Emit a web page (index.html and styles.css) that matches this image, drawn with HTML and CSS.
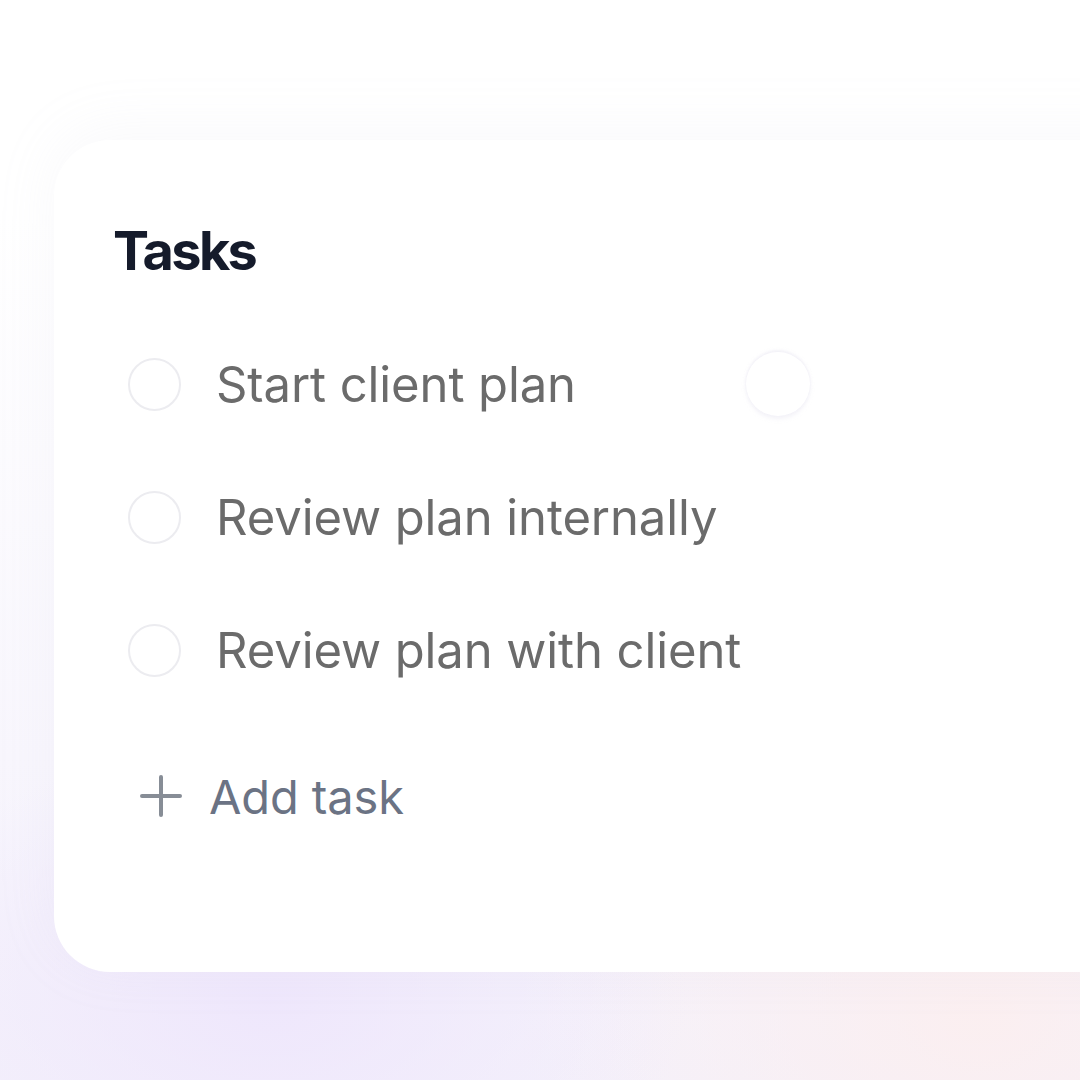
FILE: index.html
```html
<!DOCTYPE html>
<html>
<head>
<meta charset="utf-8">
<link rel="stylesheet" href="styles.css">
</head>
<body>
<div class="stage">
  <section class="card">
    <h1 class="title">Tasks</h1>
    <ul class="tasks">
      <li class="task"><span class="check"></span><span class="label">Start client plan</span><span class="ghost"></span></li>
      <li class="task"><span class="check"></span><span class="label">Review plan internally</span></li>
      <li class="task"><span class="check"></span><span class="label">Review plan with client</span></li>
    </ul>
    <div class="add">
      <svg class="plus" width="42" height="42" viewBox="0 0 42 42"><path d="M21 2v38M2 21h38" stroke="#878d96" stroke-width="4" stroke-linecap="round" fill="none"/></svg>
      <span class="add-label">Add task</span>
    </div>
  </section>
</div>
</body>
</html>
```

FILE: styles.css
```css
* { box-sizing: border-box; }
html, body { margin: 0; padding: 0; }
body {
  width: 1080px;
  height: 1080px;
  overflow: hidden;
  font-family: Inter, "Noto Sans", sans-serif;
  background:
    radial-gradient(ellipse 420px 260px at 270px 1000px, rgba(238,230,252,0.95), rgba(238,230,252,0) 100%),
    radial-gradient(ellipse 460px 300px at 980px 1020px, rgba(252,238,238,0.85), rgba(252,238,238,0) 100%),
    linear-gradient(180deg, #ffffff 0%, #ffffff 20%, #f8f6fd 70%, #f4f1fb 100%);
}
.stage {
  padding: 140px 0 0 54px;
}
.card {
  width: 1100px;
  height: 832px;
  background: #ffffff;
  border-radius: 56px 0 0 56px;
  box-shadow: 0 -10px 60px rgba(200, 195, 220, 0.1);
  padding: 78px 0 0 59px;
  position: relative;
}
.title {
  margin: 0;
  font-size: 54px;
  font-weight: 700;
  letter-spacing: -2.6px;
  color: #151b2b;
  line-height: 66px;
}
.tasks {
  list-style: none;
  margin: 34px 0 0 0;
  padding: 0;
}
.task {
  display: flex;
  align-items: center;
  height: 133px;
  position: relative;
}
.check {
  width: 53px;
  height: 53px;
  border: 2.5px solid #ececf0;
  border-radius: 50%;
  margin-left: 15px;
  flex: none;
}
.label {
  margin-left: 35px;
  font-size: 49px;
  color: #6b6b6b;
  letter-spacing: -0.1px;
}
.ghost {
  position: absolute;
  left: 633px;
  top: 34px;
  width: 64px;
  height: 64px;
  border-radius: 50%;
  background: #fff;
  box-shadow: 0 -2px 3px rgba(220, 218, 236, 0.35), 0 3px 4px rgba(220, 218, 236, 0.35);
}
.add {
  display: flex;
  align-items: center;
  margin-top: 39px;
  height: 80px;
  padding-left: 27px;
}
.plus { flex: none; }
.add-label {
  margin-left: 27px;
  font-size: 47px;
  color: #6b7384;
  letter-spacing: -0.1px;
}
```
